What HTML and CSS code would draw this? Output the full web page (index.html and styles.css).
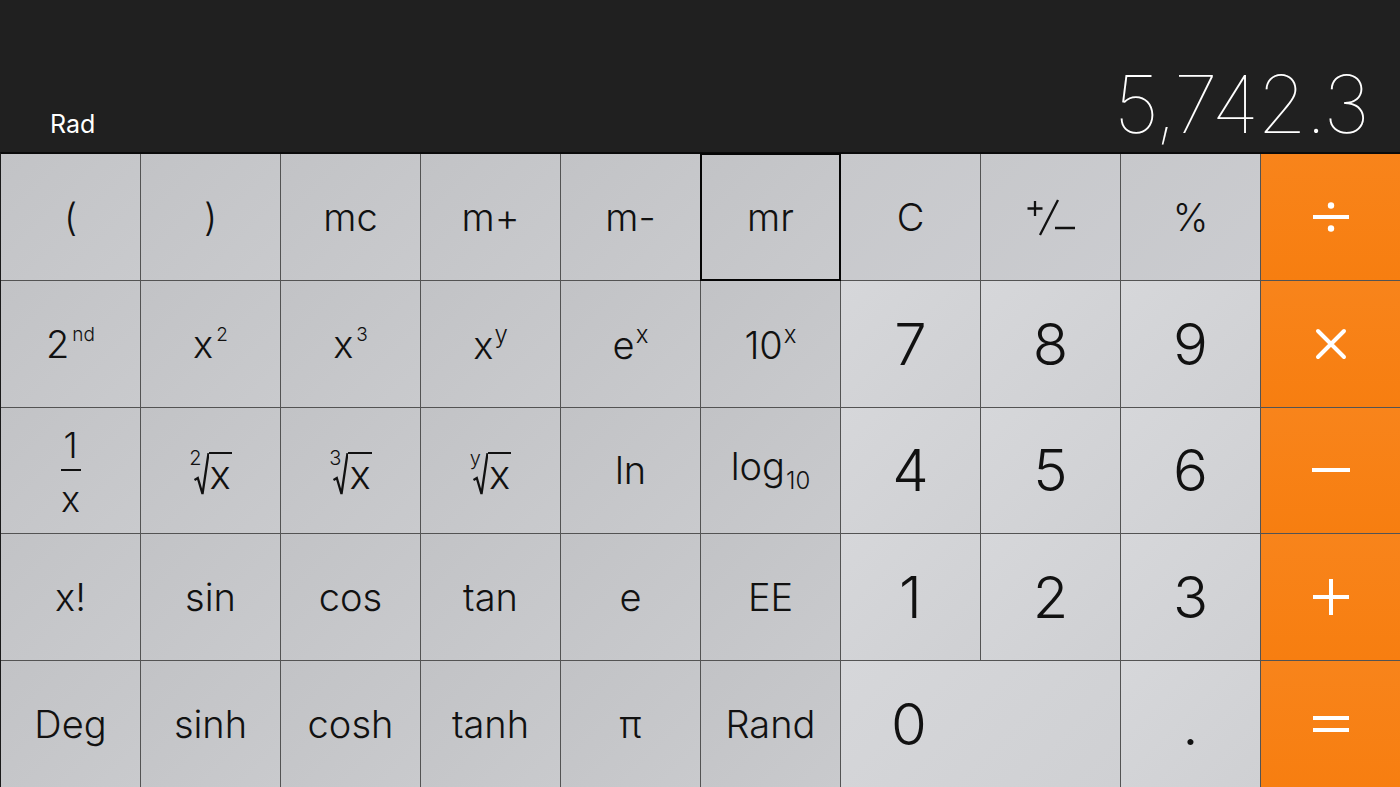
FILE: index.html
```html
<!DOCTYPE html>
<html lang="en">
<head>
<meta charset="utf-8">
<title>Calculator</title>
<link rel="stylesheet" href="styles.css">
</head>
<body>
<div class="calc">
  <div class="display">
    <span class="mode">Rad</span>
    <span class="value">5,742.3</span>
  </div>
  <div class="keys">
    <div class="key sci">(</div>
    <div class="key sci">)</div>
    <div class="key sci">mc</div>
    <div class="key sci">m+</div>
    <div class="key sci">m-</div>
    <div class="key sci selected">mr</div>
    <div class="key fn">C</div>
    <div class="key fn" aria-label="+/-">
      <svg class="pm" width="50" height="40" viewBox="0 0 50 40"><path d="M1.5 10.5 H16.5 M9 3 V18 M14 37 L32 2 M29 30 H49" fill="none" stroke="#111" stroke-width="2.3"/></svg>
    </div>
    <div class="key fn">%</div>
    <div class="key op">
      <svg width="40" height="40" viewBox="0 0 40 40"><circle cx="20" cy="8.5" r="3.2" fill="#fff"/><rect x="2" y="18" width="36" height="4" fill="#fff"/><circle cx="20" cy="31.5" r="3.2" fill="#fff"/></svg>
    </div>

    <div class="key sci"><span>2<sup class="sm">nd</sup></span></div>
    <div class="key sci"><span>x<sup class="sm">2</sup></span></div>
    <div class="key sci"><span>x<sup class="sm">3</sup></span></div>
    <div class="key sci"><span>x<sup class="md">y</sup></span></div>
    <div class="key sci"><span>e<sup class="md">x</sup></span></div>
    <div class="key sci"><span>10<sup class="md">x</sup></span></div>
    <div class="key num">7</div>
    <div class="key num">8</div>
    <div class="key num">9</div>
    <div class="key op">
      <svg width="40" height="40" viewBox="0 0 40 40"><path d="M7 7 L33 33 M33 7 L7 33" stroke="#fff" stroke-width="4" stroke-linecap="round"/></svg>
    </div>

    <div class="key sci">
      <span class="frac"><span class="frac-n">1</span><span class="frac-bar"></span><span class="frac-d">x</span></span>
    </div>
    <div class="key sci"><span class="root"><span class="idx">2</span><svg class="rad" width="15" height="44" viewBox="0 0 15 44"><path d="M0.5 28 L3.8 26 L8.5 42 L14.5 1.2" fill="none" stroke="#111" stroke-width="2.3" stroke-linejoin="miter"/></svg><span class="radicand">x</span></span></div>
    <div class="key sci"><span class="root"><span class="idx">3</span><svg class="rad" width="15" height="44" viewBox="0 0 15 44"><path d="M0.5 28 L3.8 26 L8.5 42 L14.5 1.2" fill="none" stroke="#111" stroke-width="2.3" stroke-linejoin="miter"/></svg><span class="radicand">x</span></span></div>
    <div class="key sci"><span class="root"><span class="idx">y</span><svg class="rad" width="15" height="44" viewBox="0 0 15 44"><path d="M0.5 28 L3.8 26 L8.5 42 L14.5 1.2" fill="none" stroke="#111" stroke-width="2.3" stroke-linejoin="miter"/></svg><span class="radicand">x</span></span></div>
    <div class="key sci">ln</div>
    <div class="key sci"><span>log<sub class="sub">10</sub></span></div>
    <div class="key num">4</div>
    <div class="key num">5</div>
    <div class="key num">6</div>
    <div class="key op">
      <svg width="40" height="40" viewBox="0 0 40 40"><rect x="1" y="18" width="38" height="4" fill="#fff"/></svg>
    </div>

    <div class="key sci">x!</div>
    <div class="key sci">sin</div>
    <div class="key sci">cos</div>
    <div class="key sci">tan</div>
    <div class="key sci">e</div>
    <div class="key sci">EE</div>
    <div class="key num">1</div>
    <div class="key num">2</div>
    <div class="key num">3</div>
    <div class="key op">
      <svg width="40" height="40" viewBox="0 0 40 40"><rect x="2" y="18" width="36" height="4" fill="#fff"/><rect x="18" y="2" width="4" height="36" fill="#fff"/></svg>
    </div>

    <div class="key sci">Deg</div>
    <div class="key sci">sinh</div>
    <div class="key sci">cosh</div>
    <div class="key sci">tanh</div>
    <div class="key sci">π</div>
    <div class="key sci">Rand</div>
    <div class="key num zero"><span class="zero-label">0</span></div>
    <div class="key num dot">.</div>
    <div class="key op">
      <svg width="40" height="40" viewBox="0 0 40 40"><rect x="2" y="12" width="36" height="4" fill="#fff"/><rect x="2" y="24" width="36" height="4" fill="#fff"/></svg>
    </div>
  </div>
</div>
</body>
</html>
```
FILE: styles.css
```css
html, body {
  margin: 0;
  padding: 0;
}
body {
  background: #1f1f1f;
  font-family: Inter, "Noto Sans", "Liberation Sans", sans-serif;
  width: 1400px;
  height: 787px;
  overflow: hidden;
}
.calc {
  display: flex;
  flex-direction: column;
  height: 787px;
}
.display {
  height: 152px;
  box-sizing: border-box;
  display: flex;
  justify-content: space-between;
  align-items: baseline;
  align-content: flex-end;
  flex-wrap: wrap;
  padding: 0 32px 8px 50px;
  background: #202020;
  color: #fff;
}
.mode {
  font-size: 25px;
  line-height: 1;
  font-weight: 400;
}
.value {
  font-size: 80px;
  line-height: 1;
  font-weight: 100;
  letter-spacing: -1.7px;
}
.keys {
  flex: 1;
  display: grid;
  grid-template-columns: repeat(10, 1fr);
  grid-template-rows: repeat(5, 1fr);
  gap: 1px;
  background: #535353;
  border-top: 2px solid #0a0a0a;
  border-left: 1px solid #1a1a1a;
}
.key {
  display: flex;
  align-items: center;
  justify-content: center;
  color: #111;
  font-size: 38px;
  font-weight: 300;
  line-height: 1;
  box-sizing: border-box;
}
.sci {
  background: linear-gradient(135deg, #c2c3c6 0%, #c9cacd 100%);
}
.fn {
  background: linear-gradient(135deg, #c7c8cb 0%, #cbccd0 100%);
}
.num {
  background: linear-gradient(135deg, #d6d7da 0%, #cfd0d3 100%);
  font-size: 58px;
  font-weight: 300;
}
.op {
  background: linear-gradient(180deg, #f8841b 0%, #f77e10 100%);
}
.selected {
  border: 2px solid #050505;
  margin: -1px;
}
.zero {
  grid-column: span 2;
  justify-content: flex-start;
}
.zero-label {
  width: 136px;
  text-align: center;
}
.dot {
  font-size: 58px;
}
sup, sub {
  line-height: 1;
}
.sm {
  font-size: 19px;
  vertical-align: 17px;
  margin-left: 3px;
}
.md {
  font-size: 24px;
  vertical-align: 16px;
  margin-left: 1px;
}
.sub {
  font-size: 24px;
  vertical-align: -9px;
  margin-left: 1px;
}
.pm {
  display: block;
  margin-top: 2px;
}
.frac {
  display: flex;
  flex-direction: column;
  align-items: center;
  font-size: 36px;
  margin-top: 4px;
}
.frac-bar {
  width: 20px;
  height: 2px;
  background: #111;
  margin: 6px 0 10px;
}
.root {
  display: inline-flex;
  align-items: flex-start;
  margin-top: 8px;
}
.idx {
  font-size: 20px;
  margin-right: -8px;
  margin-top: -4px;
}
.rad {
  display: block;
}
.radicand {
  font-size: 40px;
  line-height: 37px;
  border-top: 2.3px solid #111;
  padding: 2px 1px 0 1px;
}
```
